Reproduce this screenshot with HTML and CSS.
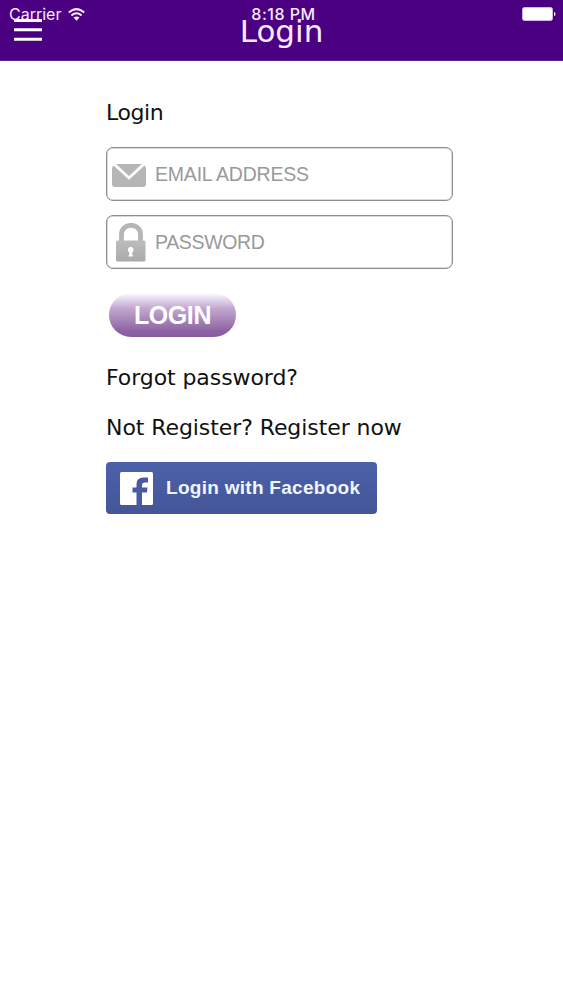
FILE: index.html
```html
<!DOCTYPE html>
<html lang="en">
<head>
<meta charset="utf-8">
<title>Login</title>
<link rel="stylesheet" href="styles.css">
</head>
<body>
<header class="header">
  <svg class="menu" width="28" height="23" viewBox="0 0 28 23" fill="#fff"><path d="M0 0h28v3H0zM0 9.300h28v3H0zM0 18.800h28v3H0z"/></svg>
  <h1 class="title">Login</h1>
  <div class="status">
    <div class="carrier"><span>Carrier</span>
      <svg width="17" height="13" viewBox="0 0 17 13" fill="none" stroke="#fbeaff" stroke-width="2"><path d="M.8 4.600Q8.500-2.400 16.200 4.600M3.400 7.400Q8.500 3 13.600 7.400"/><path d="M5.500 9.600Q8.500 7.200 11.500 9.600L8.500 12.700z" fill="#fbeaff" stroke="none"/></svg>
    </div>
    <span class="time">8:18 PM</span>
    <svg class="battery" width="34" height="14" viewBox="0 0 34 14"><rect x=".5" y=".5" width="30" height="13" rx="2" fill="#fff" stroke="#d3b4ec"/><path d="M32 5q1.500 0 1.500 2T32 9z" fill="#fff"/></svg>
  </div>
</header>
<main class="content">
  <h2 class="line heading">Login</h2>
  <form class="form">
    <label class="field">
      <svg class="envelope" width="34" height="24" viewBox="0 0 34 24" fill="#b4b6b8"><path d="M4 0h26L17 12zM1.500 1.500L17 15.800 32.500 1.500Q34 3 34 4.500V20q0 3-3 3H3q-3 0-3-3V4.500Q0 3 1.500 1.500z"/></svg>
      <span class="placeholder email">EMAIL ADDRESS</span>
    </label>
    <label class="field field-password">
      <svg width="30" height="39" viewBox="0 0 30 39"><defs><linearGradient id="lock" x2="0" y2="1"><stop stop-color="#bcbcbd"/><stop offset="1" stop-color="#a9abad"/></linearGradient></defs><path d="M5.500 19V11.500C5.500-.8 24.500-.8 24.500 11.500V19" fill="none" stroke="#b5b6b8" stroke-width="4.800"/><rect y="17.500" width="29.500" height="21" rx="1.500" fill="url(#lock)"/><path d="M12.600 28.500a2.800 2.800 0 1 1 4.200 0l-.8 1.800 1 3.200h-4.600l1-3.200z" fill="#fff"/></svg>
      <span class="placeholder password">PASSWORD</span>
    </label>
    <button class="login" type="button"><span>LOGIN</span></button>
  </form>
  <p class="line forgot">Forgot password?</p>
  <p class="line register">Not Register? Register now</p>
  <button class="facebook" type="button">
    <svg width="33" height="33" viewBox="0 0 33 33"><rect width="33" height="33" rx="1.500" fill="#fff"/><path d="M16.500 33V20.500h-4v-5h4V12q0-6.500 7-6.500H28v5h-3q-3 0-3 2.500v2.500h5.500l-.6 5H22V33z" fill="#485aa3"/></svg>
    <span>Login with Facebook</span>
  </button>
</main>
</body>
</html>
```
FILE: styles.css
```css
* { box-sizing: border-box; }
body { margin: 0; background: #fff; color: #111; font-family: Verdana, "DejaVu Sans", sans-serif; }
.header {
  position: relative;
  display: grid;
  grid-template-columns: 1fr auto 1fr;
  height: 61px;
  background: #4b0082;
  border-bottom: 1px solid #602292;
  color: #fbeaff;
}
.menu { margin: 19px 0 0 14px; }
.title { margin: 11px 0 0; font-size: 31px; line-height: 40px; font-weight: 400; }
.status {
  position: absolute;
  inset: 0 0 auto;
  display: grid;
  grid-template-columns: 1fr auto 1fr;
  align-items: center;
  height: 28px;
  padding: 0 7px 0 9px;
  font: 16px/20px Inter, sans-serif;
}
.carrier { display: flex; align-items: center; gap: 7px; }
.time { padding-left: 2px; font-weight: 500; letter-spacing: .5px; }
.battery { justify-self: end; }
.content { display: flex; flex-direction: column; align-items: flex-start; padding: 38px 106px 0; }
.line { margin: 0; font-size: 22px; line-height: 28px; font-weight: 400; letter-spacing: -.08px; white-space: nowrap; }
.heading { letter-spacing: -.4px; }
.form { display: flex; flex-direction: column; align-items: flex-start; margin-top: 20px; }
.field {
  display: flex;
  align-items: center;
  gap: 9px;
  width: 347px;
  height: 54px;
  padding-left: 5px;
  border: 1px solid #8e8e90;
  border-radius: 7px;
  box-shadow: inset 0 0 0 .5px #b5b5b7;
}
.envelope { margin-top: 3px; }
.field-password { margin-top: 14px; padding-left: 9px; }
.placeholder { font: 19.500px/24px "Liberation Sans", sans-serif; color: #99999b; }
.email { letter-spacing: -.2px; }
.password { letter-spacing: -.35px; }
.login, .facebook { border: 0; font-family: "Liberation Sans", sans-serif; font-weight: 700; color: #fff; }
.login {
  width: 127px;
  height: 44px;
  margin: 24px 0 0 3px;
  padding: 0;
  border-radius: 22px;
  background: linear-gradient(#fff 0%, #e8deef 12%, #c3a7d0 35%, #a987ba 60%, #8c60a2 88%, #895ca0);
  font-size: 25px;
  letter-spacing: -.4px;
}
.forgot { margin-top: 27px; }
.register { margin-top: 22px; }
.facebook {
  display: flex;
  align-items: center;
  gap: 13px;
  width: 271px;
  height: 52px;
  margin-top: 20px;
  padding: 0 0 0 14px;
  border-radius: 4px;
  background: linear-gradient(#4b61aa, #455598);
  color: #f0f6ff;
  font-size: 19px;
  line-height: 24px;
  letter-spacing: .28px;
  white-space: nowrap;
}
```
